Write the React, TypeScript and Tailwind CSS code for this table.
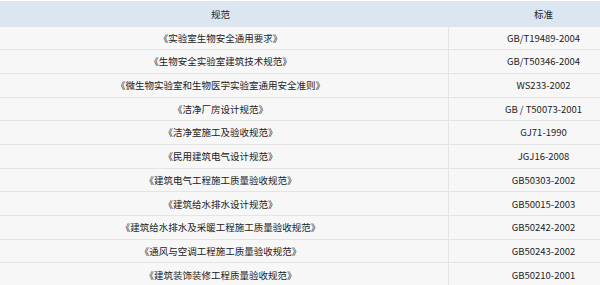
const rows: [string, string][] = [
  ["《实验室生物安全通用要求》", "GB/T19489-2004"],
  ["《生物安全实验室建筑技术规范》", "GB/T50346-2004"],
  ["《微生物实验室和生物医学实验室通用安全准则》", "WS233-2002"],
  ["《洁净厂房设计规范》", "GB / T50073-2001"],
  ["《洁净室施工及验收规范》", "GJ71-1990"],
  ["《民用建筑电气设计规范》", "JGJ16-2008"],
  ["《建筑电气工程施工质量验收规范》", "GB50303-2002"],
  ["《建筑给水排水设计规范》", "GB50015-2003"],
  ["《建筑给水排水及采暖工程施工质量验收规范》", "GB50242-2002"],
  ["《通风与空调工程施工质量验收规范》", "GB50243-2002"],
  ["《建筑装饰装修工程质量验收规范》", "GB50210-2001"],
];

const App = () => {
  return (
    <div className="w-[600px] h-[285px] overflow-hidden bg-white">
      <table
        className="mt-px ml-[-8px] w-[646px] table-fixed border-collapse text-[9.5px] text-[#222]"
        style={{ fontFamily: '"Noto Sans CJK SC", "Noto Sans", sans-serif' }}
      >
        <colgroup>
          <col className="w-[456px]" />
          <col className="w-[190px]" />
        </colgroup>
        <thead>
          <tr className="h-[24.5px] bg-[#dce6f1]">
            <th className="border border-[#e1e4e8] font-normal text-center">规范</th>
            <th className="border border-[#e1e4e8] font-normal text-center">标准</th>
          </tr>
        </thead>
        <tbody>
          {rows.map(([name, code]) => (
            <tr key={code} className="h-[23.7px] bg-[#f7f7f7]">
              <td className="border border-[#e4e4e4] text-center">{name}</td>
              <td className="border border-[#e4e4e4] text-center">{code}</td>
            </tr>
          ))}
        </tbody>
      </table>
    </div>
  );
};

export default App;
